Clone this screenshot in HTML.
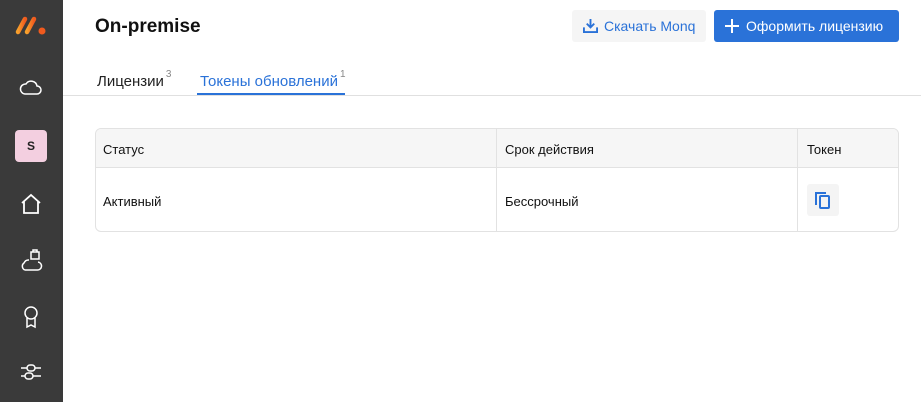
<!DOCTYPE html>
<html><head><meta charset="utf-8"><style>
*{box-sizing:border-box;margin:0;padding:0}
body{width:921px;height:402px;overflow:hidden;background:#fff;font-family:"Liberation Sans","DejaVu Sans",sans-serif;position:relative}
.sb{position:absolute;left:0;top:0;width:63px;height:402px;background:#3a3a3a}
.ic{position:absolute;left:19px}
.title{position:absolute;left:95px;top:16px;font-size:19px;font-weight:bold;color:#111}
.btn1{position:absolute;left:572px;top:10px;width:134px;height:32px;background:#f5f5f5;border-radius:3px;color:#2a72d8;font-size:14px;line-height:32px;padding-left:32px}
.btn2{position:absolute;left:714px;top:10px;width:185px;height:32px;background:#2a72d8;border-radius:3px;color:#fff;font-size:14px;line-height:32px;padding-left:32px}
.tabs{position:absolute;left:63px;right:0;top:95px;border-top:1px solid #e0e0e0}
.tab{position:absolute;top:72px;font-size:15px;color:#222}
.tab sup{font-size:10px;color:#888;position:relative;top:-3px;margin-left:2px}
.tbl{position:absolute;left:95px;top:128px;width:804px;height:104px;border:1px solid #e2e2e2;border-radius:6px;overflow:hidden;font-size:13px;color:#111}
.hd{position:absolute;left:0;top:0;width:100%;height:39px;background:#f6f6f6;border-bottom:1px solid #e2e2e2}
.v{position:absolute;top:0;bottom:0;width:1px;background:#e2e2e2}
.t{position:absolute}
</style></head><body>
<div class="sb">
<svg class="ic" style="left:14px;top:14px" width="34" height="22" viewBox="0 0 34 22"><defs><linearGradient id="g" x1="0" x2="1"><stop offset="0" stop-color="#f7a02c"/><stop offset="1" stop-color="#f05a1e"/></linearGradient></defs><line x1="4" y1="18" x2="11" y2="5" stroke="url(#g)" stroke-width="4.5" stroke-linecap="round"/><line x1="13" y1="18" x2="20" y2="5" stroke="url(#g)" stroke-width="4.5" stroke-linecap="round"/><circle cx="28" cy="17" r="3.5" fill="#f05a1e"/></svg>
<svg class="ic" style="top:76px" width="24" height="20" viewBox="0 0 24 20" fill="none" stroke="#fff" stroke-width="1.5"><path d="M6 18h12a4 4 0 0 0 0-8 6 6 0 0 0-11-2 5 5 0 0 0-1 10z"/></svg>
<div style="position:absolute;left:15px;top:130px;width:32px;height:32px;background:#f3cfe0;border-radius:4px;font-size:12px;font-weight:bold;color:#222;text-align:center;line-height:32px">S</div>
<svg class="ic" style="top:193px" width="24" height="22" viewBox="0 0 24 22" fill="none" stroke="#fff" stroke-width="1.8"><path d="M3 10L12 2l9 8M5 8v12h14V8"/></svg>
<svg class="ic" style="top:248px" width="24" height="24" viewBox="0 0 24 24" fill="none" stroke="#fff" stroke-width="1.5"><path d="M6 22h12a4 4 0 0 0 1-8M10 12a5 5 0 0 0-5 3 4 4 0 0 0 1 7"/><rect x="12" y="4" width="8" height="7"/><path d="M14 4V2h4v2"/></svg>
<svg class="ic" style="top:304px" width="24" height="26" viewBox="0 0 24 26" fill="none" stroke="#fff" stroke-width="1.5"><circle cx="12" cy="9" r="6"/><path d="M8 14v9l4-2 4 2v-9"/></svg>
<svg class="ic" style="top:360px" width="24" height="24" viewBox="0 0 24 24" fill="none" stroke="#fff" stroke-width="1.5"><path d="M2 8h6M16 8h6M2 16h4M14 16h8"/><rect x="8" y="5" width="8" height="6" rx="3"/><rect x="6" y="13" width="8" height="6" rx="3"/></svg>
</div>
<div class="title">On-premise</div>
<div class="btn1"><svg style="position:absolute;left:11px;top:8px" width="15" height="15" viewBox="0 0 16 16" fill="none" stroke="#2a72d8" stroke-width="2"><path d="M8 1v9M4 6l4 4 4-4M1 10v5h14v-5"/></svg>Скачать Monq</div>
<div class="btn2"><svg style="position:absolute;left:11px;top:9px" width="14" height="14" viewBox="0 0 14 14" stroke="#fff" stroke-width="2"><path d="M7 0v14M0 7h14"/></svg>Оформить лицензию</div>
<div class="tab" style="left:97px">Лицензии<sup>3</sup></div>
<div class="tab" style="left:200px;color:#2a72d8">Токены обновлений<sup>1</sup></div>
<div style="position:absolute;left:197px;top:93px;width:148px;height:2px;background:#2a72d8;z-index:2"></div>
<div class="tabs"></div>
<div class="tbl">
<div class="hd"></div>
<div class="v" style="left:400px"></div><div class="v" style="left:701px"></div>
<div class="t" style="left:7px;top:13px">Статус</div>
<div class="t" style="left:409px;top:13px">Срок действия</div>
<div class="t" style="left:711px;top:13px">Токен</div>
<div class="t" style="left:7px;top:65px">Активный</div>
<div class="t" style="left:409px;top:65px">Бессрочный</div>
<div style="position:absolute;left:711px;top:55px;width:32px;height:32px;background:#f4f4f4;border-radius:3px"><svg style="position:absolute;left:7px;top:7px" width="18" height="19" viewBox="0 0 18 19" fill="none" stroke="#2a72d8" stroke-width="2"><path d="M2 14V2h10"/><rect x="6" y="5" width="9" height="12" rx="1"/></svg></div>
</div>
</body></html>
